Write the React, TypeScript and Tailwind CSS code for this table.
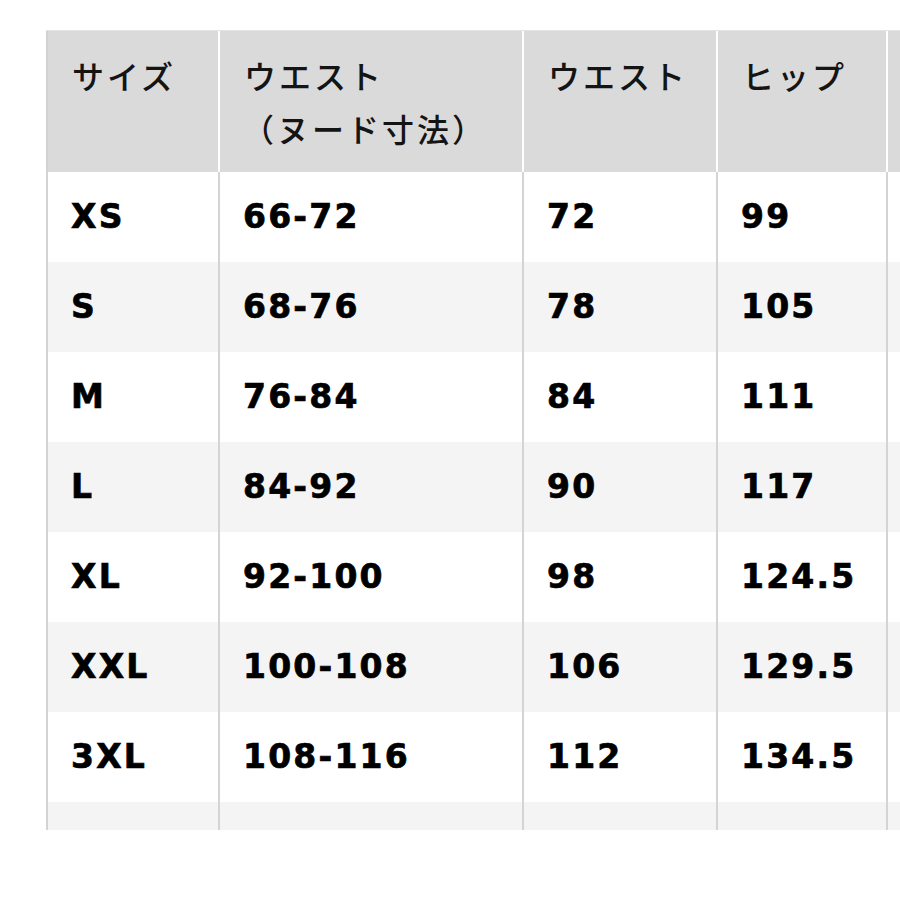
const HEADERS: string[][] = [
  ['サイズ'],
  ['ウエスト', '（ヌード寸法）'],
  ['ウエスト'],
  ['ヒップ'],
  [''],
];

const ROWS: string[][] = [
  ['XS', '66-72', '72', '99', ''],
  ['S', '68-76', '78', '105', ''],
  ['M', '76-84', '84', '111', ''],
  ['L', '84-92', '90', '117', ''],
  ['XL', '92-100', '98', '124.5', ''],
  ['XXL', '100-108', '106', '129.5', ''],
  ['3XL', '108-116', '112', '134.5', ''],
  ['', '', '', '', ''],
];

const COLS = 'grid grid-cols-[172px_304px_194px_170px_200px]';

export default function App() {
  return (
    <div className="w-[900px] h-[900px] bg-white overflow-hidden">
      <div className="ml-[46px] mt-[30px] h-[800px] w-[1040px] overflow-hidden border-t border-[#e4e4e4]">
        {/* Header */}
        <div className={`${COLS} h-[141px] bg-[#dadada]`}>
          {HEADERS.map((lines, i) => (
            <div
              key={i}
              className={`pl-[24px] pt-[18px] text-[32px] leading-[53px] tracking-[3px] font-medium text-[#141414] font-['Noto_Sans_CJK_JP',sans-serif] border-l-2 ${
                i === 0 ? 'border-[#d2d2d2]' : 'border-white'
              }`}
            >
              {lines.map((l, j) => (
                <div key={j} className={j === 1 ? '-ml-[2px]' : ''}>
                  {l}
                </div>
              ))}
            </div>
          ))}
        </div>

        {/* Body */}
        {ROWS.map((row, r) => (
          <div
            key={r}
            className={`${COLS} h-[90px] ${r % 2 === 1 ? 'bg-[#f4f4f4]' : 'bg-white'}`}
          >
            {row.map((cell, c) => (
              <div
                key={c}
                className="flex items-center pl-[23px] border-l-2 border-[#d4d4d4] text-[33px] font-bold tracking-[2.2px] text-black [-webkit-text-stroke:0.7px_black] font-['DejaVu_Sans',sans-serif]"
              >
                {cell}
              </div>
            ))}
          </div>
        ))}
      </div>
    </div>
  );
}
